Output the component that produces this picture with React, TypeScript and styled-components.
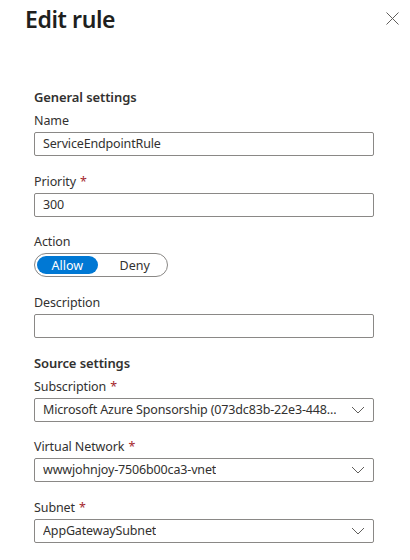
import React from 'react';
import styled, { createGlobalStyle } from 'styled-components';

const Global = createGlobalStyle`
    html, body {
        margin: 0;
        padding: 0;
        background: #ffffff;
    }
    body {
        font-family: 'Noto Sans', 'Open Sans', sans-serif;
        color: #323130;
        -webkit-font-smoothing: antialiased;
    }
`;

const Panel = styled.div`
    width: 410px;
    height: 560px;
    overflow: hidden;
    box-sizing: border-box;
`;

const Header = styled.div`
    display: flex;
    justify-content: space-between;
    align-items: flex-start;
    padding: 3px 10px 0 25px;
    height: 85px;
`;

const Title = styled.h1`
    margin: 0;
    font-size: 23px;
    letter-spacing: -0.4px;
    line-height: 32px;
    font-weight: 600;
    color: #201f1e;
`;

const CloseButton = styled.button`
    border: none;
    background: transparent;
    padding: 0;
    margin-top: 7px;
    width: 16px;
    height: 16px;
    display: flex;
    align-items: center;
    justify-content: center;
    cursor: pointer;
`;

const Form = styled.div`
    display: flex;
    flex-direction: column;
    padding: 0 36px 0 34px;
`;

const SectionTitle = styled.div`
    font-size: 13px;
    font-weight: 600;
    letter-spacing: -0.1px;
    line-height: 18px;
    margin-bottom: 6px;
`;

const Field = styled.div`
    display: flex;
    flex-direction: column;
    margin-bottom: 16.5px;
    &.last {
        margin-bottom: 16px;
    }
`;

const Label = styled.label`
    font-size: 12.5px;
    letter-spacing: -0.1px;
    line-height: 18px;
    margin-bottom: 2px;
    .star {
        color: #a4262c;
        margin-left: 4px;
    }
`;

const Input = styled.div`
    box-sizing: border-box;
    height: 24px;
    border: 1px solid #8a8886;
    border-radius: 2px;
    padding: 0 8px;
    font-size: 12.5px;
    letter-spacing: -0.15px;
    line-height: 22px;
    white-space: nowrap;
    overflow: hidden;
`;

const Select = styled(Input)`
    display: flex;
    align-items: center;
    justify-content: space-between;
    span {
        overflow: hidden;
        text-overflow: ellipsis;
        white-space: nowrap;
        margin-right: 12px;
    }
    svg {
        flex: none;
    }
`;

const Toggle = styled.div`
    box-sizing: border-box;
    display: flex;
    align-items: center;
    width: 134px;
    height: 24px;
    border: 1px solid #8a8886;
    border-radius: 12px;
    padding: 0 2px;
`;

const ToggleOption = styled.div<{ $active?: boolean }>`
    height: 18px;
    width: 62px;
    border-radius: 9px;
    display: flex;
    align-items: center;
    justify-content: center;
    font-size: 12.5px;
    background: ${(p) => (p.$active ? '#0078d4' : 'transparent')};
    color: ${(p) => (p.$active ? '#ffffff' : '#323130')};
    margin-right: ${(p) => (p.$active ? '7px' : '0')};
`;

const Chevron = () => (
    <svg width="14" height="8" viewBox="0 0 14 8">
        <path d="M1 1 L7 7 L13 1" fill="none" stroke="#605e5c" strokeWidth="1" />
    </svg>
);

const Required = () => <span className="star">*</span>;

const App = () => {
    const source = [
        { label: 'Subscription', value: 'Microsoft Azure Sponsorship (073dc83b-22e3-448...' },
        { label: 'Virtual Network', value: 'wwwjohnjoy-7506b00ca3-vnet' },
        { label: 'Subnet', value: 'AppGatewaySubnet' },
    ];
    return (
        <Panel>
            <Global />
            <Header>
                <Title>Edit rule</Title>
                <CloseButton aria-label="Close">
                    <svg width="13" height="13" viewBox="0 0 13 13">
                        <path d="M0.5 0.5 L12.5 12.5 M12.5 0.5 L0.5 12.5" stroke="#605e5c" strokeWidth="1" />
                    </svg>
                </CloseButton>
            </Header>
            <Form>
                <SectionTitle>General settings</SectionTitle>
                <Field>
                    <Label>Name</Label>
                    <Input>ServiceEndpointRule</Input>
                </Field>
                <Field>
                    <Label>
                        Priority
                        <Required />
                    </Label>
                    <Input>300</Input>
                </Field>
                <Field>
                    <Label>Action</Label>
                    <Toggle>
                        <ToggleOption $active>Allow</ToggleOption>
                        <ToggleOption>Deny</ToggleOption>
                    </Toggle>
                </Field>
                <Field className="last">
                    <Label>Description</Label>
                    <Input />
                </Field>
                <SectionTitle>Source settings</SectionTitle>
                {source.map(({ label, value }) => (
                    <Field key={label}>
                        <Label>
                            {label}
                            <Required />
                        </Label>
                        <Select>
                            <span>{value}</span>
                            <Chevron />
                        </Select>
                    </Field>
                ))}
            </Form>
        </Panel>
    );
};

export default App;
